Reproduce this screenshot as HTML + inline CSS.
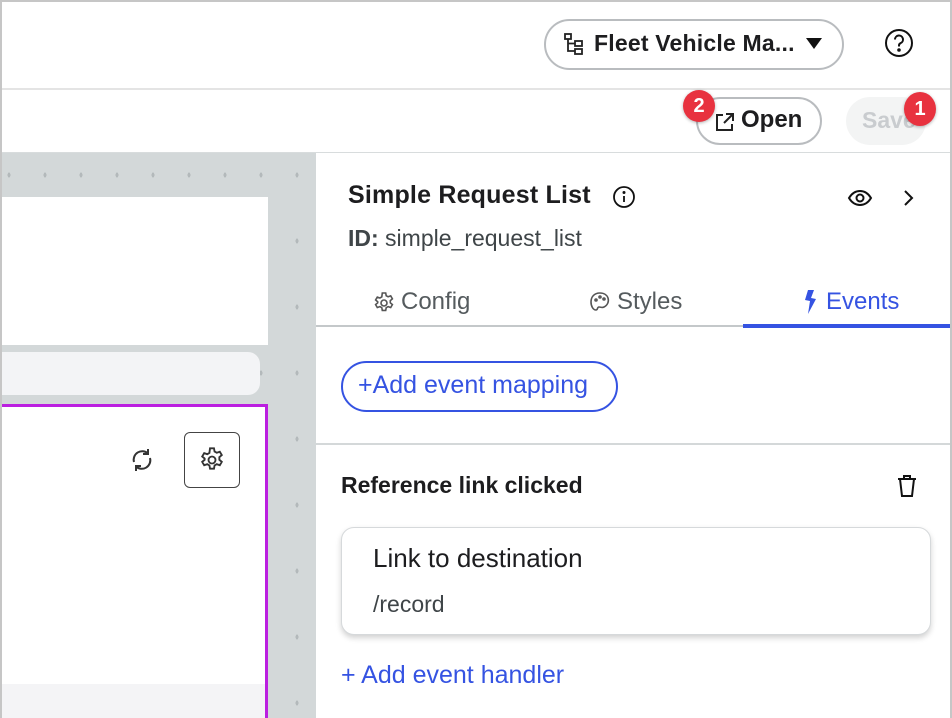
<!DOCTYPE html>
<html><head><meta charset="utf-8"><style>
*{box-sizing:border-box;margin:0;padding:0}
body{width:952px;height:718px;overflow:hidden;font-family:"Liberation Sans",sans-serif;background:#fff;position:relative;color:#1d1d1f}
.frame{position:absolute;inset:0;border:2px solid #c6c6c6;border-bottom:none;pointer-events:none;z-index:10}
.abs{position:absolute;white-space:nowrap}
.hdr{left:0;top:88px;width:952px;height:2px;background:#e4e4e4}
.pill{border:2px solid #b9bcbf;border-radius:30px;background:#fff}
.canvas{left:0;top:153px;width:316px;height:565px;background:#d3d8d9;background-image:radial-gradient(#b3b9bb 1.3px,transparent 1.5px);background-size:36px 66px;background-position:-9px -11px}
.panel{left:316px;top:153px;width:636px;height:565px;background:#fff}
.badge{width:32px;height:32px;border-radius:50%;background:#e8323f;color:#fff;font-weight:bold;font-size:20px;text-align:center;line-height:32px;box-shadow:0 1px 3px rgba(0,0,0,.3)}
.blue{color:#3553e2}
</style></head><body>
<div class="frame"></div>
<div class="abs hdr"></div>
<div class="abs" style="left:0;top:152px;width:952px;height:2px;background:#d8dcdd"></div>

<div class="abs pill" style="left:544px;top:19px;width:300px;height:51px"></div>
<svg class="abs" style="left:563px;top:32px" width="22" height="24" viewBox="0 0 22 24" fill="none" stroke="#222" stroke-width="1.8"><rect x="2" y="2" width="6" height="5"/><rect x="12" y="9" width="7" height="5"/><rect x="12" y="17" width="7" height="5"/><path d="M5 7v12h7M5 11.5h7"/></svg>
<div class="abs" style="left:594px;top:30px;font-size:23px;font-weight:bold;letter-spacing:0.2px">Fleet Vehicle Ma...</div>
<svg class="abs" style="left:806px;top:38px" width="16" height="12"><path d="M0 0h16L8 11z" fill="#111"/></svg>
<svg class="abs" style="left:884px;top:28px" width="30" height="30" viewBox="0 0 30 30" fill="none" stroke="#111" stroke-width="2"><circle cx="15" cy="15" r="13"/><path d="M11 11.5a4 4 0 1 1 5.5 3.7c-1 .5-1.5 1.2-1.5 2.3v1"/><circle cx="15" cy="22" r="0.8" fill="#111"/></svg>

<div class="abs pill" style="left:696px;top:97px;width:126px;height:48px"></div>
<svg class="abs" style="left:714px;top:111px" width="22" height="22" viewBox="0 0 22 22" fill="none" stroke="#222" stroke-width="2"><path d="M9 4H3v15h15v-6M12 3h7v7M19 3l-9 9"/></svg>
<div class="abs" style="left:741px;top:106px;font-size:24px;font-weight:bold">Open</div>
<div class="abs" style="left:846px;top:97px;width:80px;height:48px;border-radius:24px;background:#f3f4f4"></div>
<div class="abs" style="left:862px;top:107px;font-size:23px;font-weight:bold;color:#c9cccf">Save</div>
<div class="abs badge" style="left:683px;top:90px">2</div>
<div class="abs badge" style="left:904px;top:92px;height:34px;line-height:34px">1</div>

<div class="abs canvas"></div>
<div class="abs" style="left:0;top:197px;width:268px;height:148px;background:#fff"></div>
<div class="abs" style="left:0;top:352px;width:260px;height:43px;background:#f3f4f6;border-radius:0 12px 12px 0"></div>
<div class="abs" style="left:0;top:404px;width:268px;height:314px;background:#fff;border:3px solid #bb1fe0;border-left:none;border-bottom:none"></div>
<div class="abs" style="left:0;top:684px;width:265px;height:34px;background:#f4f4f6"></div>
<svg class="abs" style="left:128px;top:446px" width="28" height="28" viewBox="0 0 28 28" fill="none" stroke="#333" stroke-width="2"><path d="M6 16A8.5 8.5 0 0 1 20 7.5M22 12A8.5 8.5 0 0 1 8 20.5M20 3v5h-5M8 25v-5h5"/></svg>
<div class="abs" style="left:184px;top:432px;width:56px;height:56px;border:1.5px solid #444;border-radius:6px"></div>
<svg class="abs" style="left:198px;top:446px" width="28" height="28" viewBox="0 0 24 24" fill="none" stroke="#333" stroke-width="1.6"><circle cx="12" cy="12" r="3"/><path d="M10.3 2h3.4l.5 2.7 1.9 1.1 2.6-.9 1.7 2.9-2.1 1.8v2.2l2.1 1.8-1.7 2.9-2.6-.9-1.9 1.1-.5 2.7h-3.4l-.5-2.7-1.9-1.1-2.6.9-1.7-2.9 2.1-1.8V10.8L3.6 9l1.7-2.9 2.6.9 1.9-1.1z"/></svg>

<div class="abs panel"></div>
<div class="abs" style="left:348px;top:181px;font-size:25px;font-weight:bold;letter-spacing:0.2px">Simple Request List</div>
<svg class="abs" style="left:612px;top:185px" width="24" height="24" viewBox="0 0 24 24" fill="none" stroke="#111" stroke-width="1.8"><circle cx="12" cy="12" r="10"/><path d="M12 11v6"/><circle cx="12" cy="7.5" r="0.6" fill="#111"/></svg>
<svg class="abs" style="left:847px;top:187px" width="26" height="22" viewBox="0 0 26 22" fill="none" stroke="#111" stroke-width="2"><path d="M2 11c3-5 7-7 11-7s8 2 11 7c-3 5-7 7-11 7s-8-2-11-7z"/><circle cx="13" cy="11" r="3.5"/></svg>
<svg class="abs" style="left:901px;top:189px" width="14" height="18" viewBox="0 0 14 18" fill="none" stroke="#111" stroke-width="2"><path d="M4 2l7 7-7 7"/></svg>
<div class="abs" style="left:348px;top:225px;font-size:23px;color:#3f4548"><b>ID:</b> simple_request_list</div>

<svg class="abs" style="left:372px;top:291px" width="24" height="24" viewBox="0 0 24 24" fill="none" stroke="#555" stroke-width="1.6"><circle cx="12" cy="12" r="3"/><path d="M10.3 2h3.4l.5 2.7 1.9 1.1 2.6-.9 1.7 2.9-2.1 1.8v2.2l2.1 1.8-1.7 2.9-2.6-.9-1.9 1.1-.5 2.7h-3.4l-.5-2.7-1.9-1.1-2.6.9-1.7-2.9 2.1-1.8V10.8L3.6 9l1.7-2.9 2.6.9 1.9-1.1z"/></svg>
<div class="abs" style="left:401px;top:288px;font-size:24px;color:#555b5e">Config</div>
<svg class="abs" style="left:589px;top:291px" width="22" height="24" viewBox="0 0 22 24" fill="none" stroke="#555" stroke-width="1.6"><path d="M11 2C5 2 2 6 2 11c0 4 2 8 5 8 2 0 1-3 3-3s3 1 5 0c4-2 5-6 4-9-1-3-4-5-8-5z"/><circle cx="7" cy="9" r="1"/><circle cx="11" cy="6" r="1"/><circle cx="15" cy="8" r="1"/></svg>
<div class="abs" style="left:617px;top:288px;font-size:24px;color:#555b5e">Styles</div>
<svg class="abs" style="left:800px;top:289px" width="20" height="26" viewBox="0 0 20 26"><path d="M8 1l-3 10 5 1-2 13 8-15-5-1 3-8z" fill="#3553e2"/></svg>
<div class="abs blue" style="left:826px;top:288px;font-size:24px">Events</div>
<div class="abs" style="left:316px;top:325px;width:636px;height:2px;background:#c4c8ca"></div>
<div class="abs" style="left:743px;top:324px;width:209px;height:4px;background:#3553e2"></div>

<div class="abs" style="left:341px;top:361px;width:277px;height:51px;border:2px solid #3553e2;border-radius:26px"></div>
<div class="abs blue" style="left:358px;top:371px;font-size:25px">+Add event mapping</div>
<div class="abs" style="left:316px;top:443px;width:636px;height:2px;background:#d4d8d9"></div>

<div class="abs" style="left:341px;top:472px;font-size:23px;font-weight:bold">Reference link clicked</div>
<svg class="abs" style="left:896px;top:474px" width="22" height="24" viewBox="0 0 22 24" fill="none" stroke="#111" stroke-width="2"><path d="M2 5h18M8 5V2h6v3M4 5l2 17h10l2-17"/></svg>

<div class="abs" style="left:341px;top:527px;width:590px;height:108px;border:1.5px solid #d6d9db;border-radius:13px;box-shadow:0 3px 6px rgba(0,0,0,.18);background:#fff"></div>
<div class="abs" style="left:373px;top:543px;font-size:26px;color:#1d1d1f">Link to destination</div>
<div class="abs" style="left:373px;top:591px;font-size:23px;color:#3f4548">/record</div>

<div class="abs blue" style="left:341px;top:661px;font-size:25px">+ Add event handler</div>
</body></html>
